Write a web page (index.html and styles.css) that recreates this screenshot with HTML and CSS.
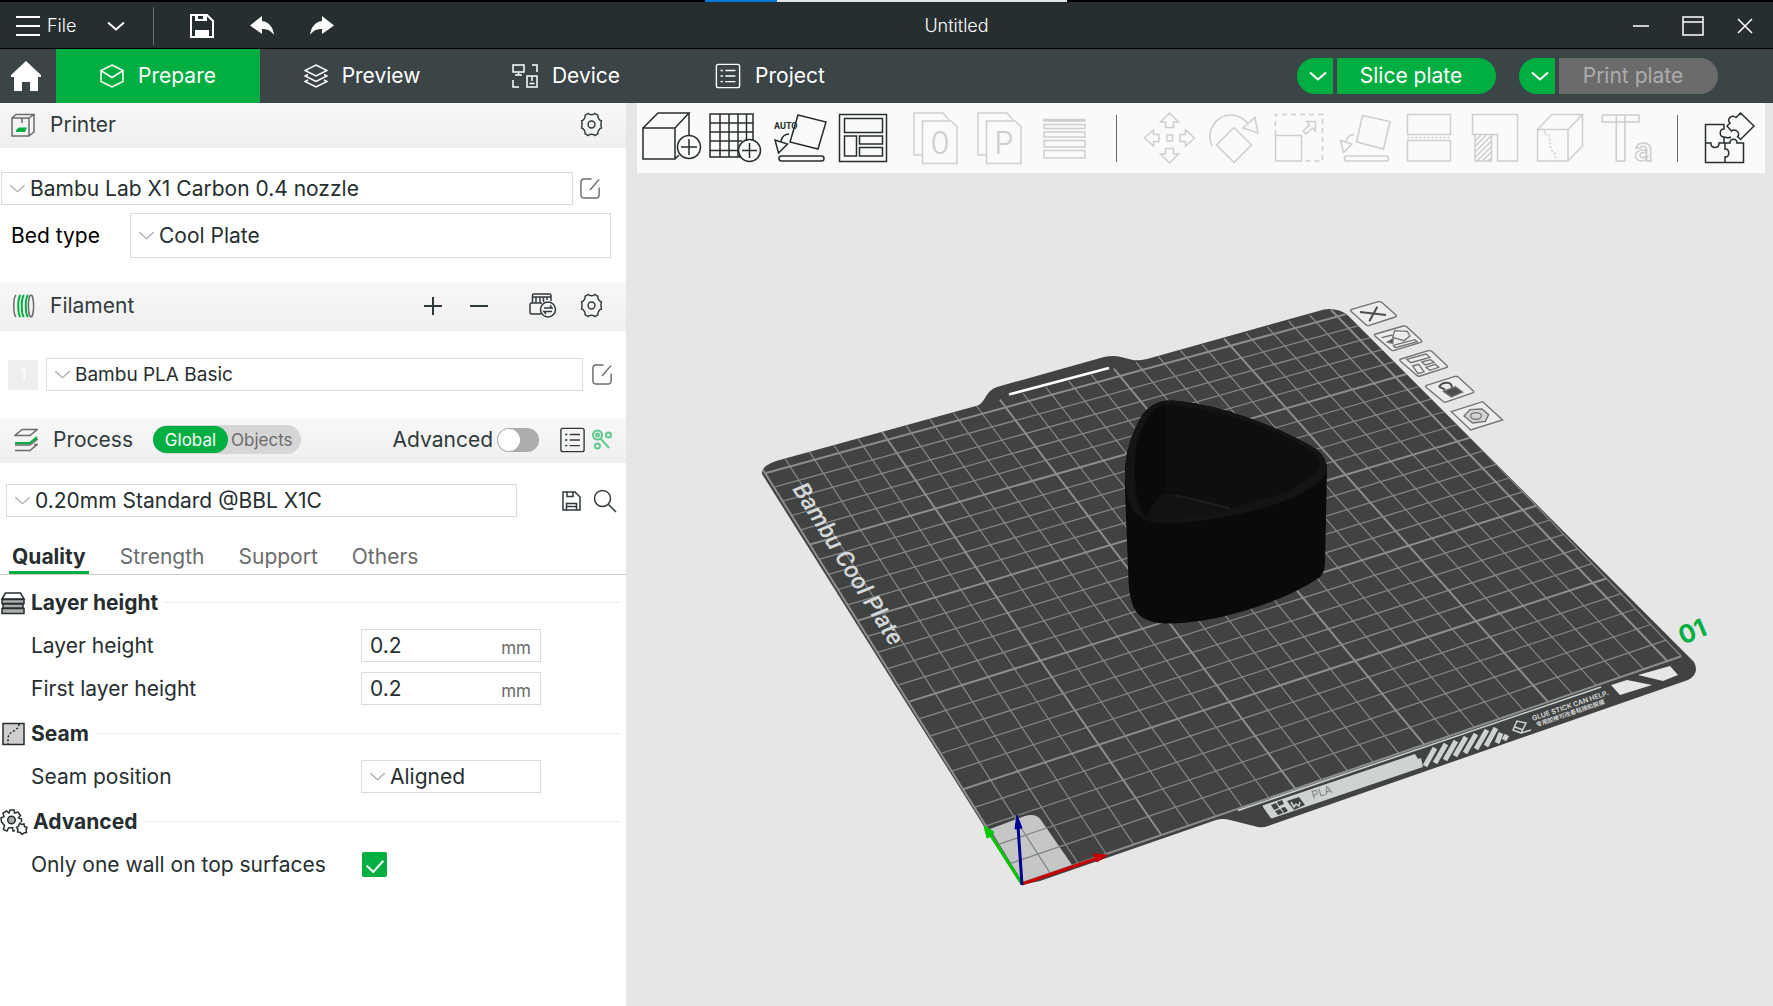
FILE: index.html
```html
<!DOCTYPE html>
<html lang="en">
<head>
<meta charset="utf-8">
<title>Untitled</title>
<link rel="stylesheet" href="styles.css">
</head>
<body>
<svg class="defs" aria-hidden="true">
  <symbol id="i-chev" viewBox="0 0 18 10"><path d="M1 1.500l8 7 8-7"/></symbol>
  <symbol id="i-gear" viewBox="0 0 26 26"><path d="M9.500 1.500c1.200 1.800 5.800 1.800 7 0l3.200 1.900c-.7 2 1.400 5.600 3.600 6-.6 1.800-.6 5.400 0 7.200-2.200.4-4.300 4-3.600 6l-3.200 1.900c-1.200-1.800-5.800-1.800-7 0l-3.200-1.900c.7-2-1.400-5.600-3.600-6 .6-1.800.6-5.400 0-7.200 2.200-.4 4.300-4 3.600-6z"/><circle cx="13" cy="13" r="3.600"/></symbol>
  <symbol id="i-edit" viewBox="0 0 24 24"><path d="M13 2H5.500Q2 2 2 5.500v13Q2 22 5.500 22h12q3.500 0 3.500-3.500V11M21 2.500l-9.500 11"/></symbol>
  <symbol id="i-list" viewBox="0 0 28 28"><rect x="1.500" y="1.500" width="25" height="25" rx="2"/><path d="M6 8h2.500M6 14h2.500M6 20h2.500M11 8h11M11 14h11M11 20h11"/></symbol>
</svg>

<div class="app">
  <div class="loadbar"><div class="loadbar-fill"></div><div class="loadbar-rest"></div></div>
  <header class="titlebar">
    <div class="title-left">
      <button class="file-btn"><svg width="24" height="20" viewBox="0 0 24 20"><path d="M0 1h24M0 10h24M0 19h24"/></svg>File</button>
      <button class="plain" aria-label="File options"><svg class="thick" width="18" height="10"><use href="#i-chev"/></svg></button>
      <span class="bar-sep"></span>
      <button class="plain" aria-label="Save"><svg class="thick" width="24" height="24" viewBox="0 0 24 24"><path d="M1 1h16l6 6v16H1z"/><path class="solid" d="M5 1h3v4h5V1h4v6H5zM5 16h14v7H5z"/></svg></button>
      <button class="plain" aria-label="Undo"><svg width="24" height="20" viewBox="0 0 24 20"><path class="solid" d="M0 9.500L12 0v5c7 1 11 6 12 14-3-4-6-6-12-6v5z"/></svg></button>
      <button class="plain" aria-label="Redo"><svg width="24" height="20" viewBox="0 0 24 20"><path class="solid" d="M24 9.500L12 0v5C5 6 1 11 0 19c3-4 6-6 12-6v5z"/></svg></button>
    </div>
    <h1 class="doc-title">Untitled</h1>
    <div class="title-right">
      <button class="plain" aria-label="Minimize"><svg width="16" height="16" viewBox="0 0 16 16"><path d="M0 8h16"/></svg></button>
      <button class="plain" aria-label="Maximize"><svg width="22" height="20" viewBox="0 0 22 20"><path d="M1 1h20v18H1zM1 6h20"/></svg></button>
      <button class="plain" aria-label="Close"><svg width="16" height="16" viewBox="0 0 16 16"><path d="M1 1l14 14M15 1L1 15"/></svg></button>
    </div>
  </header>

  <nav class="navbar">
    <button class="home" aria-label="Home"><svg width="30" height="30" viewBox="0 0 30 30"><path class="solid" d="M15 0L0 14v2h3v14h8v-9h8v9h8V16h3v-2z"/></svg></button>
    <button class="nav-tab active"><svg width="24" height="24" viewBox="0 0 24 24"><path d="M12 1l11 5.500v11L12 23 1 17.500v-11zM1.500 7L12 13.500 22.500 7"/></svg>Prepare</button>
    <button class="nav-tab"><svg width="24" height="24" viewBox="0 0 24 24"><path d="M12 1l11 5.500L12 12 1 6.500zM4 10.500l-3 1.500 11 5.500L23 12l-3-1.500M4 16l-3 1.500L12 23l11-5.500-3-1.500"/></svg>Preview</button>
    <button class="nav-tab"><svg width="26" height="24" viewBox="0 0 26 24"><path d="M1 1h11v7H1zM6.500 8v3M3 11h7M20 1h5v7M1 16v7h6M15 12h10v11H15zM20 12v5M17.500 19.500h5"/></svg>Device</button>
    <button class="nav-tab"><svg width="26" height="26"><use href="#i-list"/></svg>Project</button>
    <div class="nav-actions">
      <div class="split">
        <button class="split-arrow" aria-label="Slice options"><svg class="thick" width="20" height="10"><use href="#i-chev"/></svg></button>
        <button class="split-main">Slice plate</button>
      </div>
      <div class="split">
        <button class="split-arrow" aria-label="Print options"><svg class="thick" width="20" height="10"><use href="#i-chev"/></svg></button>
        <button class="split-main off" disabled>Print plate</button>
      </div>
    </div>
  </nav>

  <div class="work">
    <aside class="sidebar">
      <div class="section-head">
        <svg width="24" height="24" viewBox="0 0 24 24" class="soft"><path d="M1 5h17v18H1zM1 5l4-3.500h18L18 5M23 1.500V19l-5 4M11 5v5"/><path class="leaf" d="M5 17l3-2.500h8L14 19H5z"/></svg>
        <h2>Printer</h2>
        <button class="plain push" aria-label="Printer settings"><svg width="25" height="25"><use href="#i-gear"/></svg></button>
      </div>
      <div class="printer-body">
        <div class="row printer-row">
          <label class="pick grow"><svg width="17" height="9"><use href="#i-chev"/></svg><select aria-label="Printer preset"><option>Bambu Lab X1 Carbon 0.4 nozzle</option></select></label>
          <button class="plain soft" aria-label="Edit printer preset"><svg width="23" height="23"><use href="#i-edit"/></svg></button>
        </div>
        <div class="row bed-row">
          <label class="bed-label" for="bed">Bed type</label>
          <div class="pick tall grow"><svg width="17" height="9"><use href="#i-chev"/></svg><select id="bed"><option>Cool Plate</option></select></div>
        </div>
      </div>

      <div class="section-head filament-head">
        <svg width="24" height="24" viewBox="0 0 24 24" class="soft"><path d="M5 1C2 4 2 20 5 23"/><ellipse cx="20" cy="12" rx="2.600" ry="11"/><path class="leaf-line" d="M9.500 1c-3 3-3 19 0 22M13 1c-3 3-3 19 0 22M17 1c-3 3-3 19 0 22"/></svg>
        <h2>Filament</h2>
        <div class="head-tools push">
          <button class="plain" aria-label="Add filament"><svg width="24" height="24" viewBox="0 0 24 24"><path class="w2" d="M3 12h18M12 3v18"/></svg></button>
          <button class="plain" aria-label="Remove filament"><svg width="24" height="24" viewBox="0 0 24 24"><path class="w2" d="M3 12h18"/></svg></button>
          <button class="plain ams" aria-label="Sync filaments"><svg width="28" height="25" viewBox="0 0 28 25"><path d="M3.500 10V2.500Q3.500 1 5 1h15.500Q22 1 22 2.500V8M3.500 4H22M7 4v6M11 4v6M14.500 4v5M18 4v3M12 21H2.500Q1 21 1 19.500v-8Q1 10 2.500 10H13"/><circle cx="19" cy="16.500" r="7.500"/><path d="M15 15h8l-2-2.500M23 18.500h-8l2 2.500"/></svg></button>
          <button class="plain" aria-label="Filament settings"><svg width="25" height="25"><use href="#i-gear"/></svg></button>
        </div>
      </div>
      <div class="row filament-row">
        <span class="swatch">1</span>
        <label class="pick small grow"><svg width="17" height="9"><use href="#i-chev"/></svg><select aria-label="Filament preset"><option>Bambu PLA Basic</option></select></label>
        <button class="plain soft" aria-label="Edit filament preset"><svg width="23" height="23"><use href="#i-edit"/></svg></button>
      </div>

      <div class="section-head process-head">
        <svg width="24" height="24" viewBox="0 0 24 24" class="soft"><path d="M8 1.500h15l-7 6H1zM20 11.500h3l-7 5.500H1"/><path d="M1 22.500h15l7-6h-3"/><path class="leaf-line" d="M1 15h15l7-6"/></svg>
        <h2>Process</h2>
        <div class="seg"><button class="seg-on">Global</button><button>Objects</button></div>
        <label class="adv push">Advanced<input type="checkbox" role="switch" class="switch"></label>
        <button class="plain list-btn" aria-label="Parameter table"><svg width="27" height="26"><use href="#i-list"/></svg></button>
        <button class="plain" aria-label="Compare presets"><svg width="22" height="22" viewBox="0 0 22 22" class="mint"><circle cx="6.500" cy="6" r="4.500"/><circle cx="6.500" cy="6" r="1.500"/><circle cx="17.500" cy="6" r="2.500"/><circle cx="6.500" cy="17" r="2.500"/><path d="M10 10l8 9"/></svg></button>
      </div>
      <div class="row preset-row">
        <label class="pick grow"><svg width="17" height="9"><use href="#i-chev"/></svg><select aria-label="Process preset"><option>0.20mm Standard @BBL X1C</option></select></label>
        <button class="plain" aria-label="Save preset"><svg width="19" height="20" viewBox="0 0 19 20"><path d="M1 1h12l5 5v13H1zM5 1v4.500h6V1M4.500 19v-6.500h10V19M4.500 15.500h10"/></svg></button>
        <button class="plain search" aria-label="Search settings"><svg width="24" height="24" viewBox="0 0 24 24"><circle cx="9.500" cy="9.500" r="8"/><path d="M15.500 15.500L23 23"/></svg></button>
      </div>

      <div class="tabs">
        <button class="tab current">Quality</button><button class="tab">Strength</button><button class="tab">Support</button><button class="tab">Others</button>
      </div>

      <div class="settings">
        <h3><svg width="26" height="24" viewBox="0 0 26 24"><path d="M2 8l3.500-6h15L24 8z"/><path class="grey" d="M2 8.500h22v4H2zM3 13h20v4H3zM2 17.500h22v5H2z"/></svg>Layer height</h3>
        <div class="field"><label for="lh">Layer height</label><div class="num"><input id="lh" value="0.2"><span>mm</span></div></div>
        <div class="field"><label for="flh">First layer height</label><div class="num"><input id="flh" value="0.2"><span>mm</span></div></div>
        <h3><svg width="26" height="24" viewBox="0 0 26 24"><path class="ash" d="M3 1.500h21v21H3z"/><path class="dots" d="M19 2c0 8-11 6-11 15v5"/></svg>Seam</h3>
        <div class="field"><label for="seam">Seam position</label><div class="pick field-pick"><svg width="17" height="9"><use href="#i-chev"/></svg><select id="seam"><option>Aligned</option></select></div></div>
        <h3><svg width="28" height="26" viewBox="0 0 28 26"><path d="M15 21.500l-2 .5-.5-3.500-4 .5-1.500 3-3.500-1.500 1-4-3-3.500L1.500 13 1 9l3-1.500L3 4l3.500-2L9 4l1-3h4l.5 3L18 3l2.500 3.500L18.500 9l3 1v3"/><circle class="grey" cx="11.500" cy="11" r="3.800"/><path d="M20 14l1.500 1.500 2.500-.5.500 2.500 2.500 1-1 2.500.5 2.500-2.500.5-2 1.500-1.500-2-3-.5.500-2.500-1.500-2 2-1.500z"/></svg>Advanced</h3>
        <div class="field"><label for="wall">Only one wall on top surfaces</label><input type="checkbox" id="wall" class="tick" checked></div>
      </div>
    </aside>

    <main class="stage">
      <div class="toolbar">
        <div class="tools">
          <button class="tool" aria-label="Add model"><svg viewBox="0 0 64 70"><path d="M4 25h32v31H4zM4 25l15-15h31L36 25M50 10v23M36 56l4-4"/><circle cx="50" cy="44" r="11.500"/><path d="M42 44h16M50 36v16"/></svg></button>
          <button class="tool" aria-label="Add plate"><svg viewBox="0 0 64 70"><path d="M38 54H7V11h43v26M17 11v43M26 11v43M35 11v43M43.500 11v27M7 20h43M7 29h43M7 38h32M7 47.500h28"/><circle cx="46.500" cy="47.500" r="11"/><path d="M39 47.500h15M46.500 40v15"/></svg></button>
          <button class="tool" aria-label="Auto orient"><svg viewBox="0 0 64 70"><path d="M31 12l28 7-8 27-28-7zM8 37l12.500 4-9 9zM22 31c-4 0-7 3-8 7"/><rect x="12" y="53" width="45" height="5" rx="2.500"/><text x="7" y="26" class="tool-auto">AUTO</text></svg></button>
          <button class="tool" aria-label="Arrange all"><svg viewBox="0 0 64 70"><path d="M8.500 11.500h47v47h-47zM13.500 15.500h38v14h-38zM13.500 33h12v20h-12zM28.500 33h23v8h-23zM28.500 44.500h23V53h-23z"/></svg></button>
        </div>
        <div class="tools off">
          <button class="tool" disabled aria-label="Split to objects"><svg viewBox="0 0 64 70"><path d="M18 52h-8V10h29l6 7M18.500 18H47l6 5.500v37H18.500z"/><text x="36" y="51" class="tool-letter">0</text></svg></button>
          <button class="tool" disabled aria-label="Split to parts"><svg viewBox="0 0 64 70"><path d="M18 52h-8V10h29l6 7M18.500 18H47l6 5.500v37H18.500z"/><text x="36" y="51" class="tool-letter">P</text></svg></button>
          <button class="tool" disabled aria-label="Variable layer height"><svg viewBox="0 0 64 70"><path d="M12 16.500h41V18H12zM12 21.500h41v4H12zM12 29h41v5H12zM12 37.500h41v6.500H12zM12 47.500h41V55H12z"/></svg></button>
        </div>
        <span class="tool-sep"></span>
        <div class="tools wide off">
          <button class="tool" disabled aria-label="Move"><svg viewBox="0 0 64 70"><path d="M32.500 10l9 9h-5v5.500h-8V19h-5zM32.500 60l9-9h-5v-5.500h-8V51h-5zM7.500 35l9-8v4.500H22v7h-5.500V43zM57.500 35l-9-8v4.500H43v7h5.500V43zM30 32h5.500v6H30z"/></svg></button>
          <button class="tool" disabled aria-label="Rotate"><svg viewBox="0 0 64 70"><path d="M10 43C3 27 15 12 29 12c7 0 12 3 16.500 8M53 14.500L56 30l-15-5zM32 24.500L49.500 42 32 59.500 14.500 42z"/></svg></button>
          <button class="tool" disabled aria-label="Scale"><svg viewBox="0 0 64 70"><path d="M8.500 32.500h26V58h-26zM39.500 18.500h9V28l-3-3-6.500 6-3-3 6.500-6z"/><path class="dash" d="M8.500 32V11.500h47V58H35"/></svg></button>
          <button class="tool" disabled aria-label="Lay on face"><svg viewBox="0 0 64 70"><path d="M30.500 12.500L58 18.500 51.500 46l-27-7zM8.500 37.500L20 41l-8.500 8.500zM22 31.500c-4 0-7 3-8 7"/><rect x="12.500" y="53" width="44" height="5" rx="2.500"/></svg></button>
          <button class="tool" disabled aria-label="Cut"><svg viewBox="0 0 64 70"><path d="M10.500 11.500h43v20h-43zM10.500 37.500h43V58h-43z"/><path class="dots" d="M10.500 34.500h43"/></svg></button>
          <button class="tool" disabled aria-label="Supports"><svg viewBox="0 0 64 70"><path d="M10.500 11.500h45V58h-20V31.500h-25zM13 31.500V58h16.500V31.500M13 38l6.500-6.500M13 43.500l12-12M13 49l16.500-16.500M13 54.500L29.500 38M15 58l14.500-14.500M20.500 58l9-9M26 58l3.500-3.500"/></svg></button>
          <button class="tool" disabled aria-label="Seam painting"><svg viewBox="0 0 64 70"><path d="M10.500 26.500H41V58H10.500zL25 11.500h30.500L41 26.500M55.500 11.500V43L41 58"/><path class="dots" d="M17.500 28v3.500H22l2 15.500 4.500 4v7"/></svg></button>
          <button class="tool" disabled aria-label="Text"><svg viewBox="0 0 64 70"><text x="9" y="58" class="tool-t">T<tspan class="tool-a" dx="-6">a</tspan></text></svg></button>
        </div>
        <span class="tool-sep"></span>
        <div class="tools">
          <button class="tool" aria-label="Assembly view"><svg viewBox="0 0 64 70"><path d="M7.500 21.500H26V26c-5 0-5 8 0 8v6h-5c1 6-9 6-8 0H7.500zM7.500 40v19.500H27V54c5 1 5-9 0-8v-6h5c-1-5 8-5 7 0h6.500v19.500H27M42.500 10L56 23 42.500 36.500l-3-3c4-3-3-9-6-5.500L29 23l3-3c-4-4 2-9 6-5.500zM26 34c3 0 3 2 7 0"/></svg></button>
        </div>
      </div>

      <svg class="scene" viewBox="626 103 1147 903" preserveAspectRatio="xMidYMid slice" role="img" aria-label="Build plate with one model">
        <defs><clipPath id="on-plate"><use href="#plate"/></clipPath></defs>
        <path id="plate" class="plate" d="M1021 885L762 474q-1-8 14-13L976 406q5-1 9-8 5-9 12-11L1104 357q9-2 17 0l12 3q5 1 14-1L1324 309.500q14-2 24 6L1694 662q6 12-6 18L1268 826q-5 2-10 1l-28-7q-7-2-14 0L1040 881z"/>
        <path class="tab-line" d="M1009 394.500L1109 368"/>
        <path class="nozzle-pad" d="M990 829l35-13q11-3 16 4l31 45-49 18z"/>
        <g id="grid" clip-path="url(#on-plate)"></g>
        <path class="edge-line" d="M1238 810.500L1601 687"/>
        <path class="strip" d="M1264 805l151-51 3 5 3-1 2 9-150 51q-2 1-3-1l-7-10q-1-2 1-2z"/>
        <path class="stripes" d="M1425 766l10-18M1435 763l11-19M1445 760l11-19M1455 756l11-19M1465 753l11-19M1476 749l11-19M1486 746l10-18M1497 743l4-10M1504 740l3-5"/>
        <path class="cutout" d="M1611 685l16-5 25 5-32 10zM1638 675l32-9 8 9-15 6z"/>
        <path class="glue" d="M1513 730l4-9 9 2-5 10zM1515 727l8 3M1521 733l10-3"/>
        <path class="mark" d="M1271 805l5-2 3 5-5 2zM1277 802l5-2 2 4-5 2zM1275 811l5-2 3 4-5 2zM1281 808l4-1 3 4-4 2zM1287 801l12-4 6 8-11 5z"/>
        <path class="mark-in" d="M1291 802l3 5 2-3 3 2 1-4"/>
        <text class="pla" transform="translate(1313 799) rotate(-18)">PLA</text>
        <text class="tiny" transform="translate(1533 721) rotate(-19)">GLUE STICK CAN HELP.</text>
        <text class="tiny cjk" transform="translate(1537 727) rotate(-19)">专用胶棒可改善粘接和脱模</text>
        <text class="plate-name" transform="translate(792 489) rotate(58)">Bambu Cool Plate</text>
        <text class="plate-no" transform="translate(1683 645) rotate(-23)">01</text>

        <g class="plate-tools" transform="translate(1330 290) scale(.3333)">
          <path class="card" d="M65 58l80-23q6-1 10 2l43 38q4 4-2 6l-78 25q-6 2-10-2L63 64q-4-4 2-6zM137 132l83-24q6-1 10 2l44 41q4 4-2 6l-79 24q-6 2-10-2l-48-41q-4-4 2-6zM213 207l82-25q6-1 10 2l46 43q4 4-2 6l-79 25q-6 2-10-2l-49-43q-4-4 2-6zM290 286l85-27q6-1 10 2l45 42q4 4-2 6l-79 27q-6 2-10-2l-51-42q-4-4 2-6zM364 365l94-30 60 55-96 30z"/>
          <path class="ink" d="M90 66l78 9M142 50l-24 44"/>
          <path d="M194 122l38 2 8 14-18 14-34-10zM190 166l64-17 8 6-66 18zM155 143l32-8"/><path class="fill" d="M172 156l18-10-2 14z"/>
          <path d="M230 208l58-16 12 10-58 16zM248 228l18-5 16 22-18 6zM276 216l26-7 10 8-26 8zM288 232l28-9 10 9-27 9z"/>
          <path class="ink" d="M346 300l-18-10q6-13 26-12 12 2 12 16"/><path class="fill" d="M340 304l36-14 22 16-34 15z"/>
          <path class="nut" d="M402 378l18-19 36-2 20 17-10 20-38 5z"/><ellipse cx="438" cy="378" rx="16" ry="10"/>
        </g>

        <path class="body" d="M1171 400.500Q1200 402 1240 415T1316 449Q1327 457 1327 470L1325 563Q1325 572 1320 577 1293 596 1247 610T1165 623.500Q1142 623 1134 608 1129 596 1128.500 580L1125 490Q1124 450 1140 420 1150 400 1171 400.500z"/>
        <path class="rim" d="M1171 400.500Q1200 402 1240 415T1316 449Q1327 457 1327 470 1325 482 1290 499 1245 516 1190 522 1150 527 1136 514 1124 500 1125 466 1127 440 1142 415 1153 400 1171 400.500z"/>
        <path class="inside" d="M1171 405Q1200 407 1240 419T1310 451Q1321 460 1319 467 1315 477 1286 492 1240 509 1182 517 1155 521 1148 518 1134 510 1134 470 1138 425 1156 408 1162 405 1171 405z"/>
        <path class="inside-left" d="M1165 405Q1145 410 1136 447 1131 490 1146 515L1160 496 1166 492z"/>
        <path class="floor" d="M1148 515q8-19 17-21 14-2 65 14-40 10-82 11z"/>
        <path class="glint" d="M1174 495.500q24 4 56 13"/>

        <path class="ax-y" d="M1022 884L988 831"/><path class="ax-y tip" d="M984 826l10 6-3 4-4 2z"/>
        <path class="ax-x" d="M1022 884L1098 858"/><path class="ax-x tip" d="M1107 855l-14-1 4 8z"/>
        <path class="ax-z" d="M1022 885L1018 826"/><path class="ax-z tip" d="M1017 815l5 13-7 1z"/>
      </svg>
    </main>
  </div>
</div>
<script src="plate.js"></script>
</body>
</html>
```
FILE: styles.css
```css
*{box-sizing:border-box}
body{margin:0;font-family:Inter,"Noto Sans","Noto Sans CJK SC",sans-serif;font-size:21px;line-height:28px;color:#262e30;background:#fff}
button,input,select{font:inherit;color:inherit;margin:0;padding:0;border:0;background:none;border-radius:0}
h1,h2,h3{margin:0;font-weight:400;font-size:21px}
svg{flex:none;display:block;fill:none;stroke:currentColor;stroke-width:1.5}
.defs{position:absolute;width:0;height:0}
.solid{fill:currentColor;stroke:none}
.thick{stroke-width:2}
.w2{stroke-width:2}
.plain{display:flex;align-items:center;justify-content:center}
.push{margin-left:auto}
.grow{flex:1}

.app{min-height:100vh;display:flex;flex-direction:column}
.loadbar{height:2px;background:#000;display:flex;padding-left:705px}
.loadbar-fill{width:72px;background:#0078d7}
.loadbar-rest{width:290px;background:#e2e6e7}

.titlebar{height:47px;background:#262e30;border-bottom:1px solid #000;color:#fff;display:grid;grid-template-columns:1fr auto 1fr;align-items:center;padding:1px 20px 0 16px}
.titlebar svg{stroke-width:2}
.titlebar .title-right svg{stroke-width:1.5}
.title-left{display:flex;align-items:center}
.file-btn{display:flex;align-items:center;gap:7px;font-size:18px;font-weight:300;margin-right:31px}
.bar-sep{width:1px;height:38px;background:#6b6f70;margin:0 36px 0 28px}
.title-left .plain + .plain{margin-left:36px}
.doc-title{font-size:18px;font-weight:300;padding-left:144px}
.title-right{display:flex;align-items:center;justify-content:flex-end;gap:33px}

.navbar{height:54px;background:#3b4446;color:#fff;display:flex;align-items:stretch;padding-right:55px}
.home{width:56px;display:flex;align-items:center;justify-content:center;padding-right:4px}
.nav-tab{width:204px;display:flex;align-items:center;justify-content:center;gap:14px}
.nav-tab.active{background:#00ae42}
.nav-actions{margin-left:auto;display:flex;align-items:center;gap:23px}
.split{display:flex;gap:4px}
.split-arrow{width:36px;height:36px;background:#00ae42;border-radius:18px 0 0 18px;display:flex;align-items:center;justify-content:center;padding-left:6px}
.split-main{width:159px;height:36px;background:#00ae42;border-radius:0 18px 18px 0;padding-right:11px}
.split-main.off{background:#6b6b6b;color:#acacac}

.work{flex:1;display:flex}
.sidebar{width:626px;background:#fff}
.section-head{height:45px;background:linear-gradient(#f8f8f8,#efefef);display:flex;align-items:center;padding:0 22px 2px 11px}
.section-head h2{margin-left:15px}
.section-head,.preset-row{color:#303a3c}
.section-head .soft,.soft{color:#6b6b6b}
.leaf{fill:#00ae42;stroke:none}
.leaf-line{stroke:#00ae42;stroke-width:2}
.row{display:flex;align-items:center}
.pick{display:flex;align-items:center;height:33px;border:1px solid #dbdbdb;padding-left:7px;gap:4px;color:#262e30}
.pick svg{color:#acacac}
.pick select{appearance:none;flex:1;min-width:0;height:100%;outline:0}
.pick.tall{height:45px}
.pick.small{font-size:19px}
.printer-body{padding:24px 15px 24px 1px}
.printer-row{gap:6px;padding-right:9px;margin-bottom:8px}
.bed-row{padding-left:10px}
.bed-label{width:119px;color:#000}
.filament-head{height:49px}
.head-tools{display:flex;align-items:center;gap:22px}
.ams{margin-left:16px}
.filament-row{padding:27px 12px 27px 8px;gap:8px}
.swatch{width:30px;height:30px;background:#eee;color:#fff;font-size:17px;display:flex;align-items:center;justify-content:center}
.process-head{padding:0 13px 2px 14px}
.seg{display:flex;height:29px;border-radius:15px;background:#d6d6d6;margin-left:20px;font-size:17px;padding:1px 0;color:#6b6b6b}
.seg button{padding:0 8px 0 3px}
.seg .seg-on{background:#00ae42;color:#fff;border-radius:14px;padding:0;width:75px}
.adv{display:flex;align-items:center;gap:4px}
.switch{appearance:none;width:42px;height:24px;border-radius:12px;background:#acacac;padding:1px}
.switch::before{content:"";display:block;width:22px;height:22px;border-radius:50%;background:#fff}
.switch:checked{background:#00ae42;padding-left:19px}
.list-btn{margin:0 5px 0 20px}
.mint{color:#63c98b;stroke-width:2}
.preset-row{padding:21px 9px 0 6px;gap:12px}
.preset-row .pick{margin-right:33px}

.tabs{height:58px;border-bottom:1px solid #cecece;display:flex;align-items:flex-end;gap:28px;padding-left:9px}
.tab{height:37px;padding:5px 3px 0;color:#6b6b6b;border-bottom:3px solid transparent}
.tab.current{color:#262e30;font-weight:700;border-color:#00ae42}
.settings{padding:6px 5px 0 0}
h3{height:43px;display:flex;align-items:center;font-weight:700;gap:5px;margin-top:2px}
h3:first-child{margin-top:0}
h3::after{content:"";flex:1;height:1px;background:#eee}
.grey{fill:#acacac}
.ash{fill:#cecece}
.dots{stroke-dasharray:2 2}
.field{height:43px;display:flex;align-items:center;padding-left:31px}
.field label{width:330px}
.field-pick,.num{width:180px;height:33px}
.num{display:flex;align-items:center;border:1px solid #dbdbdb;padding:0 9px 0 8px}
.num input{flex:1;min-width:0;outline:0}
.num span{font-size:17px;color:#6b6b6b;padding-top:4px}
.tick{appearance:none;width:25px;height:25px;border-radius:2px;background:#dbdbdb;margin-left:1px;display:flex;justify-content:center;padding-top:4px}
.tick:checked{background:#00ae42}
.tick:checked::before{content:"";width:8px;height:14px;border:solid #fff;border-width:0 2px 2px 0;transform:rotate(42deg)}

.stage{flex:1;min-width:0;background:#e6e6e6;display:grid}
.toolbar,.scene{grid-area:1/1}
.toolbar{align-self:start;z-index:1;height:70px;margin:0 8px 0 11px;padding:0 3px 0 2px;background:#fafafa;display:flex;align-items:center}
.tools{display:flex;color:#262e30}
.tool{width:64px;height:70px}
.wide .tool{width:65px}
.tool svg{width:64px;height:70px;overflow:visible}
.tools.off{color:#cecece}
.tools + .tools{margin-left:9px}
.tool-sep{width:1px;height:47px;background:#6b6b6b;margin:0 20px}
.dash{stroke-dasharray:5 4}
.tool text{fill:currentColor;stroke:none}
.tool .tool-auto{font-size:9px;font-weight:700;font-family:Roboto,sans-serif}
.tool .tool-letter{font-size:31px;font-weight:300;text-anchor:middle}
.tool .tool-t{fill:none;stroke:currentColor;font-weight:600;font-size:64px;line-height:1;font-family:Roboto,sans-serif}
.tool .tool-a{font-size:34px}

.scene{width:100%;height:100%;min-height:600px}
.scene path{stroke:none}
.plate{fill:#414342}
.scene .tab-line{stroke:#fff;stroke-width:2.5}
.nozzle-pad{fill:#c4c7c6}
.scene .minor{stroke:#838685;stroke-width:1.25}
.scene .major{stroke:#8b8e8d;stroke-width:2}
.scene .edge-line{stroke:#ced2d0;stroke-width:1.5}
.strip{fill:#ced2d0}
.scene .stripes{stroke:#ced2d0;stroke-width:5}
.cutout{fill:#e6e6e6}
.scene .glue,.scene .mark-in{stroke:#ced2d0;stroke-width:1.5}
.mark{fill:#414342}
.scene text{stroke:none;fill:#ced2d0}
.scene .pla{fill:#7d807f;font-size:11px}
.scene .tiny{font-size:7px;font-weight:700}
.scene .cjk{font-size:6px;font-family:"Noto Sans CJK SC",sans-serif}
.scene .plate-name{font-size:24px;font-weight:500;font-style:italic;fill:#d5d8d8;font-family:Roboto,sans-serif}
.scene .plate-no{font-size:25px;font-weight:700;fill:#00ae42}
.plate-tools path,.plate-tools ellipse{stroke:#6f7271;stroke-width:4}
.scene .plate-tools path{stroke:#6f7271}
.plate-tools .card{fill:#ececec}
.scene .plate-tools .ink{stroke:#4b4e4d;stroke-width:6}
.plate-tools .fill{fill:#4b4e4d}
.plate-tools .nut{fill:#d3d4d4}
.body{fill:#0a0a0a}
.rim{fill:#141414}
.inside{fill:#0e0e0e}
.inside-left{fill:#0a0a0a}
.floor{fill:#121212}
.scene .glint{stroke:#222;stroke-width:1.5}
.scene .ax-x,.scene .ax-y,.scene .ax-z{stroke-width:3}
.scene .ax-x{stroke:#c80000}
.scene .ax-y{stroke:#00c800}
.scene .ax-z{stroke:#000091}
.scene .tip{stroke-width:1}
.ax-x.tip{fill:#c80000}
.ax-y.tip{fill:#00c800}
.ax-z.tip{fill:#000091}
```
FILE: plate.js
```js
// Draws the 256 mm build-plate grid in perspective.
const P0 = [1021.7, 883], PX = [1667.3, 661], PXY = [1337.5, 316.5], PY = [765.3, 473.3];
const SPAN = 250, SIZE = 256;

const dx1 = PX[0] - PXY[0], dx2 = PY[0] - PXY[0], sx = P0[0] - PX[0] + PXY[0] - PY[0];
const dy1 = PX[1] - PXY[1], dy2 = PY[1] - PXY[1], sy = P0[1] - PX[1] + PXY[1] - PY[1];
const det = dx1 * dy2 - dx2 * dy1;
const g = (sx * dy2 - dx2 * sy) / det;
const h = (dx1 * sy - sx * dy1) / det;

function project(x, y) {
  const u = x / SPAN, v = y / SPAN, w = g * u + h * v + 1;
  return [0, 1].map(i =>
    (((PX[i] - P0[i] + g * PX[i]) * u + (PY[i] - P0[i] + h * PY[i]) * v + P0[i]) / w).toFixed(1));
}

function path(kind, pairs) {
  const el = document.createElementNS('http://www.w3.org/2000/svg', 'path');
  el.setAttribute('class', kind);
  el.setAttribute('d', pairs.map(([a, b]) => `M${project(...a)}L${project(...b)}`).join(''));
  document.getElementById('grid').append(el);
}

const minor = [], major = [];
for (let t = 0; t <= SPAN; t += 10) {
  const set = t % 50 ? minor : major;
  set.push([[t, 0], [t, SIZE]], [[0, t], [SIZE, t]]);
}
minor.push([[SIZE, 0], [SIZE, SIZE]]);
path('minor', minor);
path('major', major);
```
